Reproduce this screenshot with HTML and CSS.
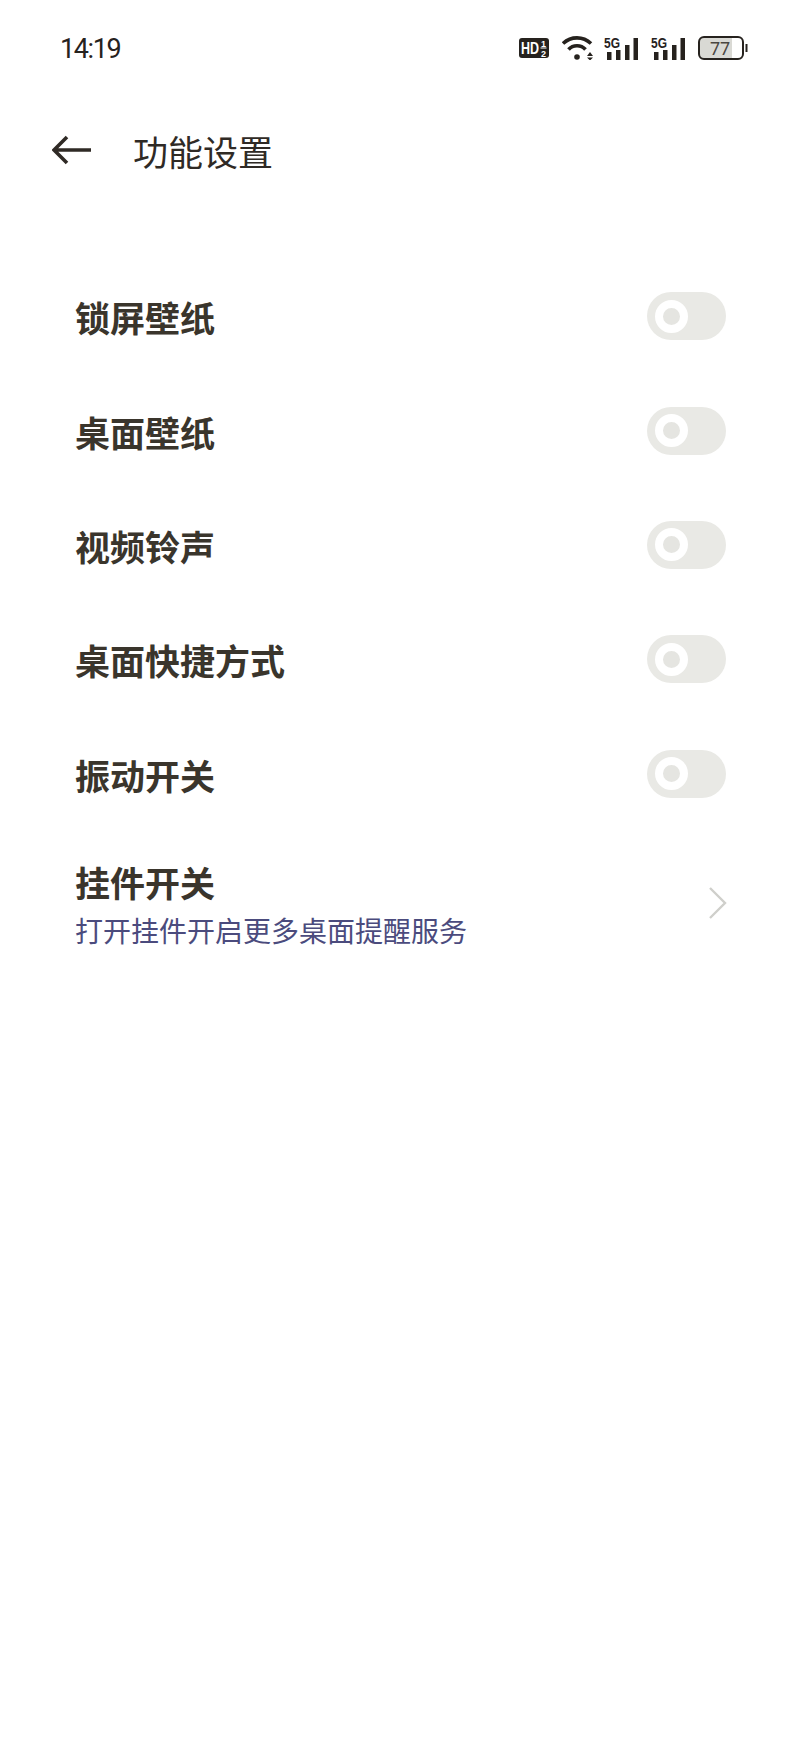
FILE: index.html
```html
<!DOCTYPE html>
<html lang="zh-CN">
<head>
    <meta charset="UTF-8">
    <meta name="viewport" content="width=device-width, initial-scale=1.0">
    <title>功能设置</title>
    <link rel="stylesheet" href="styles.css">
</head>
<body>
    <div class="status-bar">
        <span class="status-time">14:19</span>
        <div class="status-icons">
            <svg class="icon-hd" width="30" height="20" viewBox="0 0 30 20">
                <rect width="30" height="20" rx="3" fill="#26221e"/>
                <text x="2" y="16" class="hd-text" textLength="18" lengthAdjust="spacingAndGlyphs">HD</text>
                <text x="22" y="8.5" class="hd-frac">1</text>
                <rect x="21.5" y="9.5" width="6" height="1" fill="#ffffff"/>
                <text x="22" y="18.5" class="hd-frac">2</text>
            </svg>
            <svg class="icon-wifi" width="32" height="24" viewBox="0 0 32 24">
                <path d="M1 7.5C9 0 21 0 29 7.5" fill="none" stroke="#26221e" stroke-width="3.6"/>
                <path d="M6.5 13.5C11 8.5 19 8.5 23.5 13.5" fill="none" stroke="#26221e" stroke-width="3.6"/>
                <circle cx="15" cy="21" r="2.8" fill="#26221e"/>
                <path d="M25 20L28 16L31 20ZM25 21.5H31L28 24.5Z" fill="#26221e"/>
            </svg>
            <svg class="icon-signal" width="34" height="28" viewBox="0 -4 34 28">
                <text x="0" y="12" class="signal-text" textLength="16" lengthAdjust="spacingAndGlyphs">5G</text>
                <rect x="3" y="16" width="4.5" height="8" fill="#26221e"/>
                <rect x="12" y="14" width="4.5" height="10" fill="#26221e"/>
                <rect x="21" y="9" width="4.5" height="15" fill="#26221e"/>
                <rect x="29.5" y="2" width="4.5" height="22" fill="#26221e"/>
            </svg>
            <svg class="icon-signal" width="34" height="28" viewBox="0 -4 34 28">
                <text x="0" y="12" class="signal-text" textLength="16" lengthAdjust="spacingAndGlyphs">5G</text>
                <rect x="3" y="16" width="4.5" height="8" fill="#26221e"/>
                <rect x="12" y="14" width="4.5" height="10" fill="#26221e"/>
                <rect x="21" y="9" width="4.5" height="15" fill="#26221e"/>
                <rect x="29.5" y="2" width="4.5" height="22" fill="#26221e"/>
            </svg>
            <svg class="icon-battery" width="50" height="24" viewBox="0 0 50 24">
                <rect x="2" y="2" width="32" height="20" fill="#d9d9d4"/>
                <rect x="1" y="1" width="44" height="22" rx="5" fill="none" stroke="#26221e" stroke-width="2"/>
                <rect x="47.5" y="8" width="2" height="8" fill="#26221e"/>
                <text x="12" y="18.5" class="battery-text">77</text>
            </svg>
        </div>
    </div>

    <div class="app-header">
        <svg class="back-arrow" width="40" height="30" viewBox="0 0 40 30">
            <path d="M39 15H3M15 2L2 15L15 28" fill="none" stroke="#2f2a25" stroke-width="3.6"/>
        </svg>
        <h1 class="page-title">功能设置</h1>
    </div>

    <div class="settings-list">
        <div class="settings-row">
            <span class="row-label">锁屏壁纸</span>
            <span class="toggle"><span class="toggle-knob"></span></span>
        </div>
        <div class="settings-row">
            <span class="row-label">桌面壁纸</span>
            <span class="toggle"><span class="toggle-knob"></span></span>
        </div>
        <div class="settings-row">
            <span class="row-label">视频铃声</span>
            <span class="toggle"><span class="toggle-knob"></span></span>
        </div>
        <div class="settings-row">
            <span class="row-label">桌面快捷方式</span>
            <span class="toggle"><span class="toggle-knob"></span></span>
        </div>
        <div class="settings-row">
            <span class="row-label">振动开关</span>
            <span class="toggle"><span class="toggle-knob"></span></span>
        </div>
        <div class="settings-row settings-row-link">
            <div class="row-text">
                <span class="row-label">挂件开关</span>
                <span class="row-sub">打开挂件开启更多桌面提醒服务</span>
            </div>
            <svg class="chevron" width="20" height="34" viewBox="0 0 20 34">
                <path d="M2 2L17 17L2 32" fill="none" stroke="#cfcfcb" stroke-width="2.4"/>
            </svg>
        </div>
    </div>
</body>
</html>
```

FILE: styles.css
```css
* {
    margin: 0;
    padding: 0;
    box-sizing: border-box;
}

body {
    font-family: "Noto Sans CJK SC", "Noto Sans", sans-serif;
    background: #ffffff;
    color: #3a352c;
    min-height: 100vh;
}

.status-bar {
    display: flex;
    align-items: center;
    justify-content: space-between;
    height: 48px;
    margin-top: 24px;
    padding: 0 52px 0 60px;
}

.status-time {
    font-family: Roboto, sans-serif;
    font-size: 27px;
    letter-spacing: -1.4px;
    color: #26221e;
    position: relative;
    top: 1px;
}

.status-icons {
    display: flex;
    align-items: center;
    gap: 13px;
}

.icon-wifi {
    margin-right: -3px;
}

.icon-signal {
    margin-top: -4px;
}

.hd-text {
    font-family: "Liberation Sans", sans-serif;
    font-size: 16px;
    font-weight: 700;
    fill: #ffffff;
}

.hd-frac {
    font-family: "Liberation Sans", sans-serif;
    font-size: 9px;
    font-weight: 700;
    fill: #ffffff;
}

.signal-text {
    font-family: "Liberation Sans", sans-serif;
    font-size: 15px;
    font-weight: 700;
    fill: #26221e;
}

.battery-text {
    font-family: Roboto, sans-serif;
    font-size: 18px;
    fill: #4a4640;
}

.app-header {
    display: flex;
    align-items: center;
    height: 60px;
    margin-top: 48px;
    padding-left: 52px;
}

.back-arrow {
    margin-right: 41px;
}

.page-title {
    font-size: 35px;
    font-weight: 400;
    color: #2f2a25;
}

.settings-list {
    margin-top: 79px;
    padding: 0 74px 0 75px;
}

.settings-row {
    display: flex;
    align-items: center;
    justify-content: space-between;
    height: 114.4px;
}

.settings-row-link {
    height: 130px;
    margin-top: 8px;
}

.row-label {
    font-size: 35px;
    font-weight: 700;
    line-height: 46px;
    position: relative;
    top: 1px;
}

.row-text {
    display: flex;
    flex-direction: column;
}

.row-sub {
    font-size: 28px;
    line-height: 40px;
    color: #4b4b7d;
    margin-top: 6px;
}

.toggle {
    display: flex;
    align-items: center;
    width: 79px;
    height: 48px;
    padding-left: 8px;
    background: #e9e9e5;
    border-radius: 24px;
}

.toggle-knob {
    width: 33px;
    height: 33px;
    border: 8px solid #ffffff;
    border-radius: 50%;
    background: #e5e5e1;
}

.chevron {
    margin: -2px -2px 0 0;
}
```
